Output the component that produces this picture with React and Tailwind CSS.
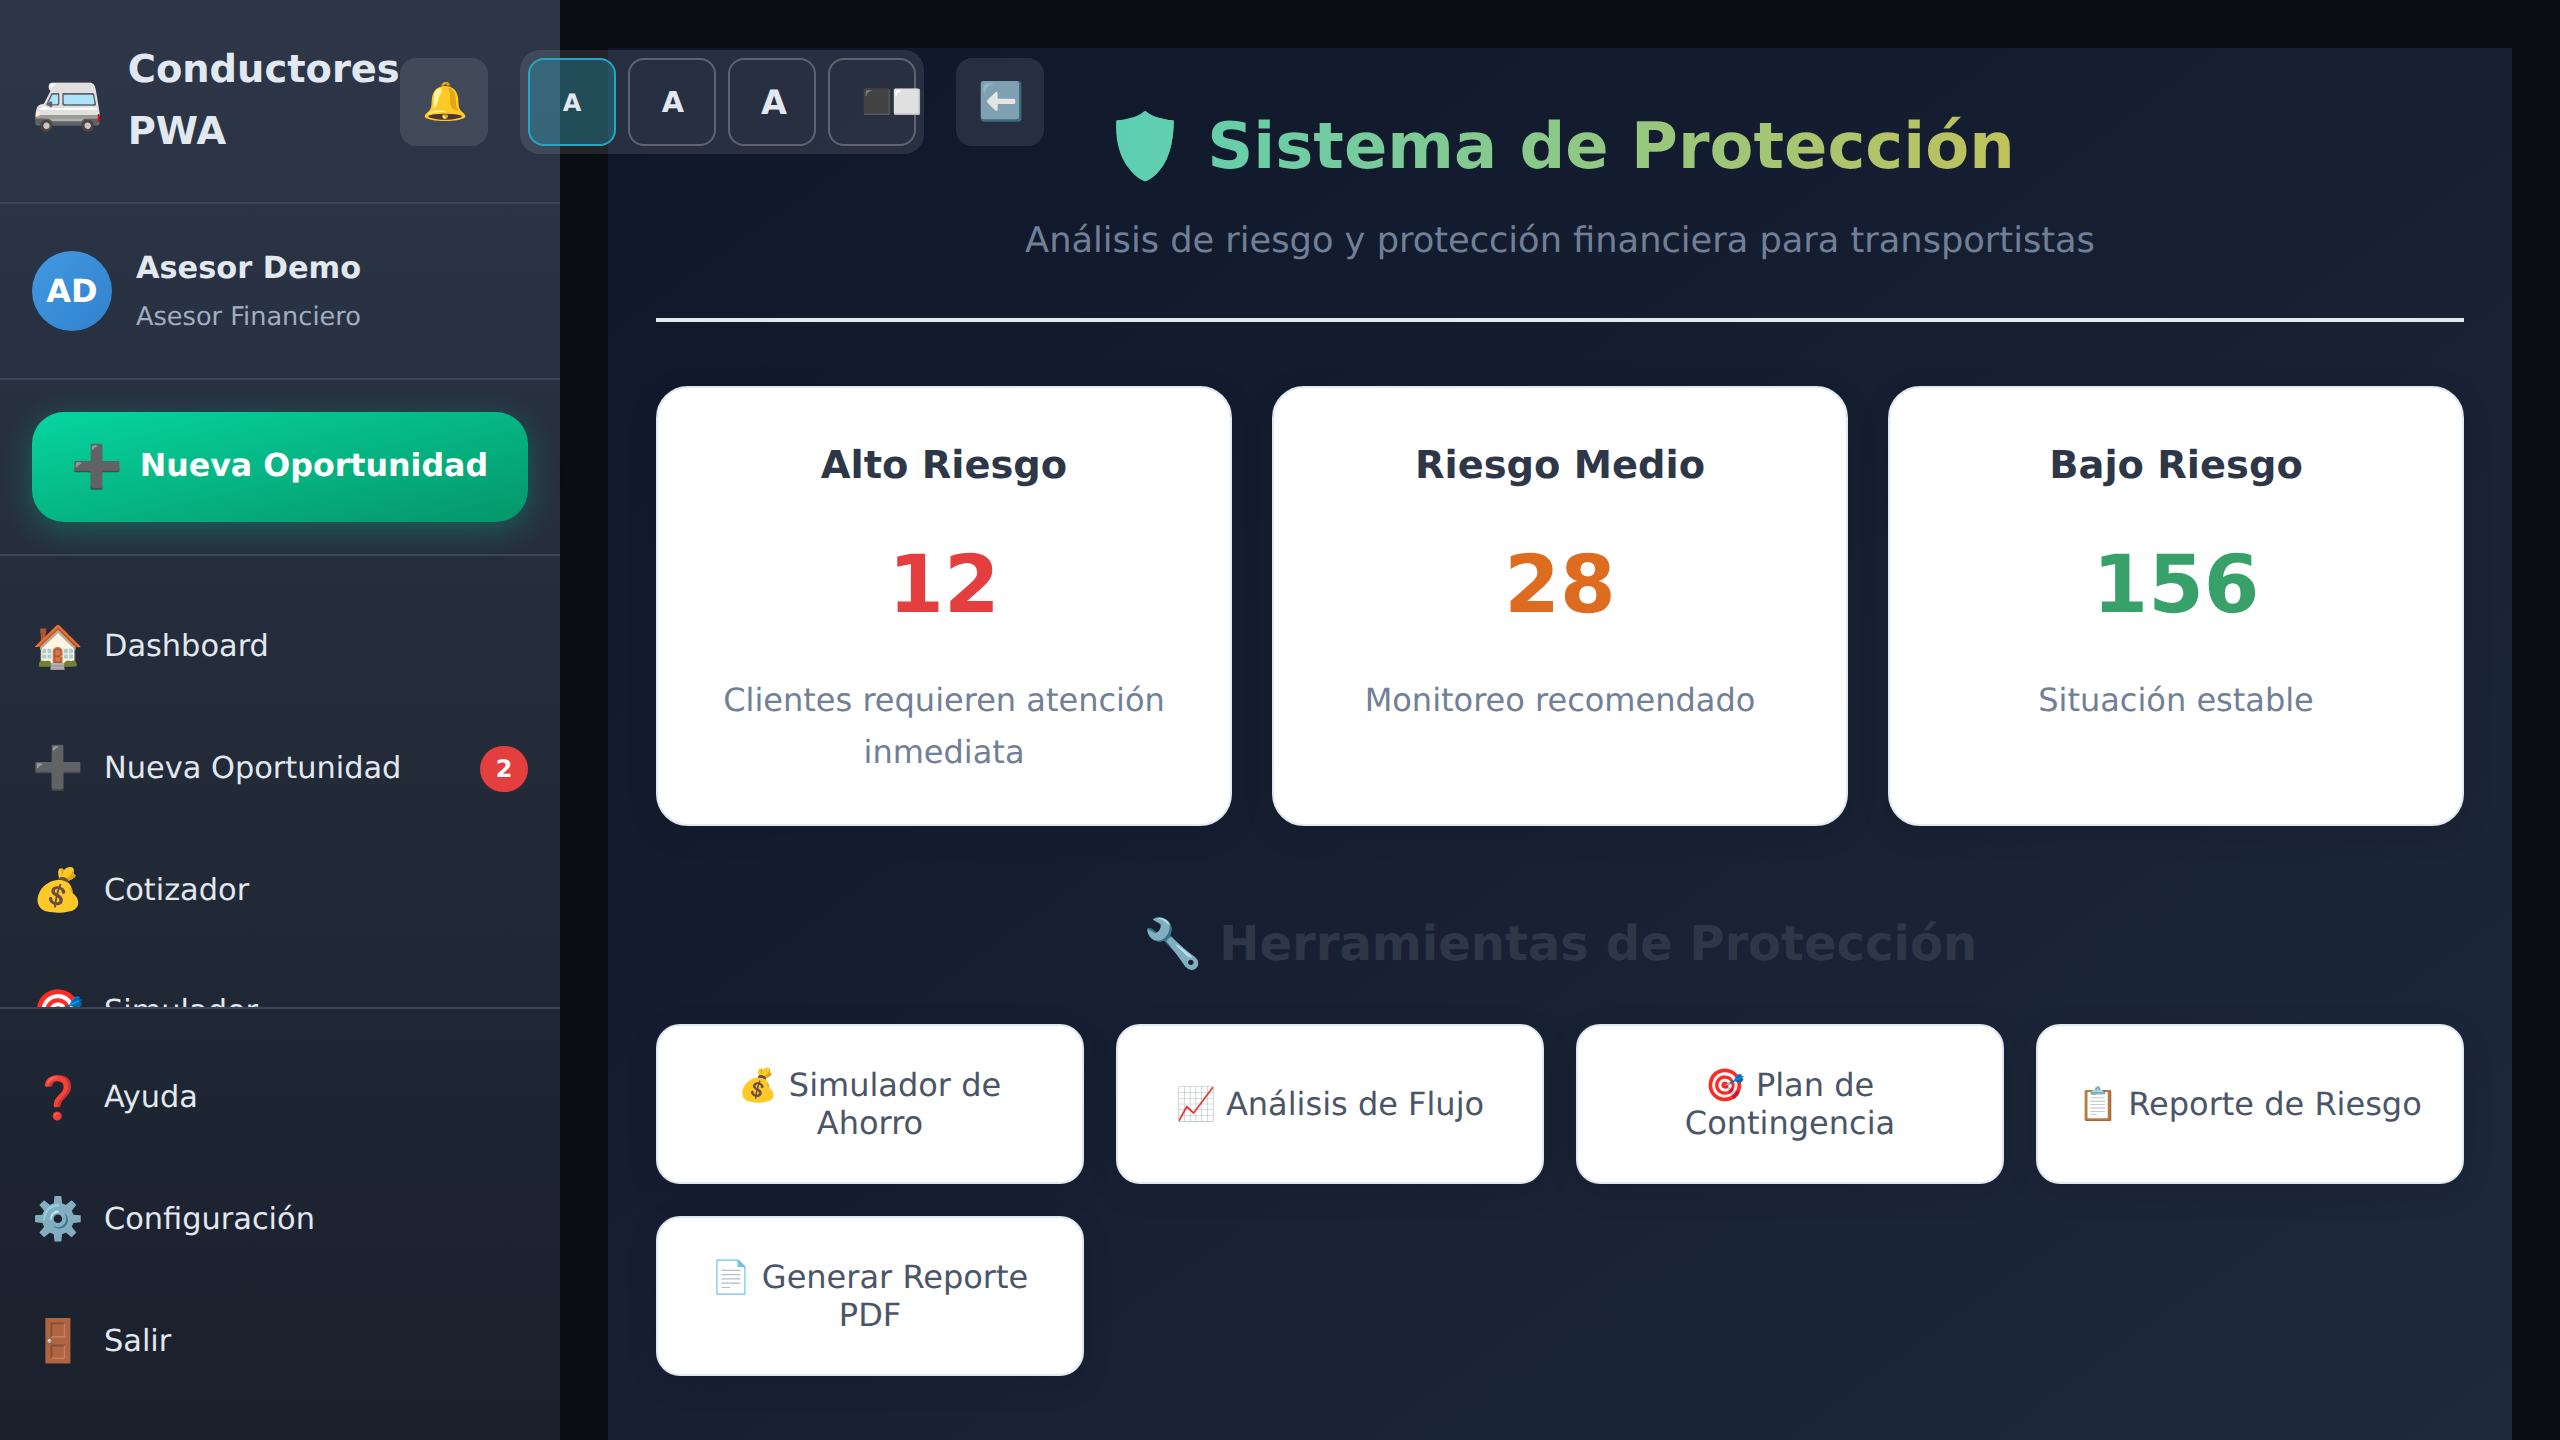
const navTop = [
  ["🏠", "Dashboard"],
  ["➕", "Nueva Oportunidad", "2"],
  ["💰", "Cotizador"],
  ["🎯", "Simulador"],
];
const navBottom = [
  ["❓", "Ayuda"],
  ["⚙️", "Configuración"],
  ["🚪", "Salir"],
];
const cards = [
  ["Alto Riesgo", "12", "text-[#e53e3e]", "Clientes requieren atención inmediata"],
  ["Riesgo Medio", "28", "text-[#dd6b20]", "Monitoreo recomendado"],
  ["Bajo Riesgo", "156", "text-[#38a169]", "Situación estable"],
];
const tools = ["💰 Simulador de Ahorro", "📈 Análisis de Flujo", "🎯 Plan de Contingencia", "📋 Reporte de Riesgo", "📄 Generar Reporte PDF"];

function NavItem({ icon, label, badge }) {
  return (
    <div className="flex h-[121.6px] shrink-0 items-center px-[32px]">
      <span className="mb-[3px] mr-[24px] w-[48px] shrink-0 text-center text-[41.6px] leading-none">{icon}</span>
      <span className="flex-1 text-[30.4px] leading-[1.6] text-[#e2e8f0]">{label}</span>
      {badge && (
        <span className="flex h-[46px] w-[48px] items-center justify-center rounded-full bg-[#e53e3e] text-[24px] font-bold text-white">{badge}</span>
      )}
    </div>
  );
}

export default function App() {
  return (
    <div className="relative flex h-screen overflow-hidden bg-[#0a0d12] font-['DejaVu_Sans','Noto_Color_Emoji',sans-serif] [text-rendering:geometricPrecision]">
      <aside className="flex w-[560px] shrink-0 flex-col bg-gradient-to-b from-[#2d3748] to-[#1a202c]">
        <div className="flex h-[204px] shrink-0 items-center border-b-2 border-[#3b4557] pl-[32px]">
          <span className="mr-[24px] text-[57.6px] leading-none">🚐</span>
          <span className="w-[280px] text-[38.4px] font-bold leading-[62px] text-[#e2e8f0]">Conductores PWA</span>
        </div>
        <div className="flex h-[176px] shrink-0 items-center gap-[24px] border-b-2 border-[#3b4557] px-[32px]">
          <div className="flex h-[80px] w-[80px] items-center justify-center rounded-full bg-gradient-to-br from-[#4299e1] to-[#3182ce] text-[32px] font-bold text-white">AD</div>
          <div>
            <div className="mt-[1px] text-[30.4px] font-bold leading-[1.6] text-[#e2e8f0]">Asesor Demo</div>
            <div className="mt-[3px] text-[25.6px] leading-[1.6] text-[#a0aec0]">Asesor Financiero</div>
          </div>
        </div>
        <div className="flex h-[176px] shrink-0 items-center border-b-2 border-[#3b4557] px-[32px]">
          <div className="flex h-[110px] w-full items-center justify-center gap-[16px] rounded-[32px] bg-gradient-to-br from-[#06d6a0] to-[#059669] text-[31.7px] font-bold text-white shadow-[0_8px_32px_rgba(6,214,160,0.3)]">
            <span className="text-[41.6px] leading-none">➕</span>
            <span>Nueva Oportunidad</span>
          </div>
        </div>
        <nav className="flex min-h-0 flex-1 flex-col overflow-hidden pt-[31px]">
          {navTop.map(([i, l, b]) => <NavItem key={l} icon={i} label={l} badge={b} />)}
        </nav>
        <div className="flex h-[433px] shrink-0 flex-col border-t-2 border-[#3b4557] pt-[29px]">
          {navBottom.map(([i, l]) => <NavItem key={l} icon={i} label={l} />)}
        </div>
      </aside>

      <main className="mx-[48px] mt-[48px] min-w-0 flex-1 overflow-hidden bg-gradient-to-br from-[#0f172a] to-[#1e293b] px-[48px] pt-[48px]">
        <div className="flex h-[226px] flex-col items-center border-b-4 border-[#e2e8f0]">
          <h1 className="w-full bg-[linear-gradient(90deg,#28d6e1,#f2bb2e)] bg-clip-text text-center text-[64px] font-bold leading-[1.6] text-transparent">🛡️ Sistema de Protección</h1>
          <p className="mt-[15px] text-[35.2px] leading-[1.6] text-[#718096]">Análisis de riesgo y protección financiera para transportistas</p>
        </div>

        <div className="mt-[64px] grid grid-cols-3 gap-[40px]">
          {cards.map(([t, n, c, d]) => (
            <div key={t} className="flex h-[440px] flex-col items-center rounded-[32px] border-2 border-[#e2e8f0] bg-white px-[50px] pt-[47px] text-center shadow-[0_8px_32px_rgba(0,0,0,0.1)]">
              <h3 className="text-[38.4px] font-bold leading-[1.6] text-[#2d3748]">{t}</h3>
              <div className={`mt-[25px] text-[80px] font-bold leading-[1.6] ${c}`}>{n}</div>
              <p className="mt-[26px] text-[32px] leading-[1.6] text-[#718096]">{d}</p>
            </div>
          ))}
        </div>

        <h2 className="mt-[80px] text-center text-[48px] font-bold leading-[1.6] text-[#2d3748]">🔧 Herramientas de Protección</h2>

        <div className="mt-[41px] grid grid-cols-4 gap-[32px]">
          {tools.map((t) => (
            <div key={t} className="flex h-[160px] items-center justify-center rounded-[24px] border-2 border-[#e2e8f0] bg-white px-[32px] text-center text-[32px] leading-[38px] text-[#4a5568] shadow-[0_8px_32px_rgba(0,0,0,0.1)]">
              {t}
            </div>
          ))}
        </div>
      </main>

      <div className="absolute left-[400px] top-[50px] flex items-center gap-[32px]">
        <div className="flex h-[88px] w-[88px] items-center justify-center rounded-[16px] bg-white/10 pl-[2px] text-[37px]">🔔</div>
        <div className="flex gap-[12px] rounded-[20px] bg-white/10 p-[8px]">
          <div className="flex h-[88px] w-[88px] items-center justify-center rounded-[16px] border-2 border-[#22a7c4] bg-[#22a7c4]/30 pt-[2px] text-[24px] font-bold text-[#e2e8f0]">A</div>
          <div className="flex h-[88px] w-[88px] items-center justify-center rounded-[16px] border-2 border-white/25 pl-[2px] pt-[2px] text-[28.8px] font-bold text-[#e2e8f0]">A</div>
          <div className="flex h-[88px] w-[88px] items-center justify-center rounded-[16px] border-2 border-white/25 pl-[4px] pt-[2px] text-[33.6px] font-bold text-[#e2e8f0]">A</div>
          <div className="flex h-[88px] w-[88px] items-center whitespace-nowrap rounded-[16px] border-2 border-white/25 pl-[32px] text-[24px]">⬛⬜</div>
        </div>
        <div className="flex h-[88px] w-[88px] items-center justify-center rounded-[16px] bg-white/10 pl-[2px] text-[37px] opacity-90">⬅️</div>
      </div>
    </div>
  );
}
